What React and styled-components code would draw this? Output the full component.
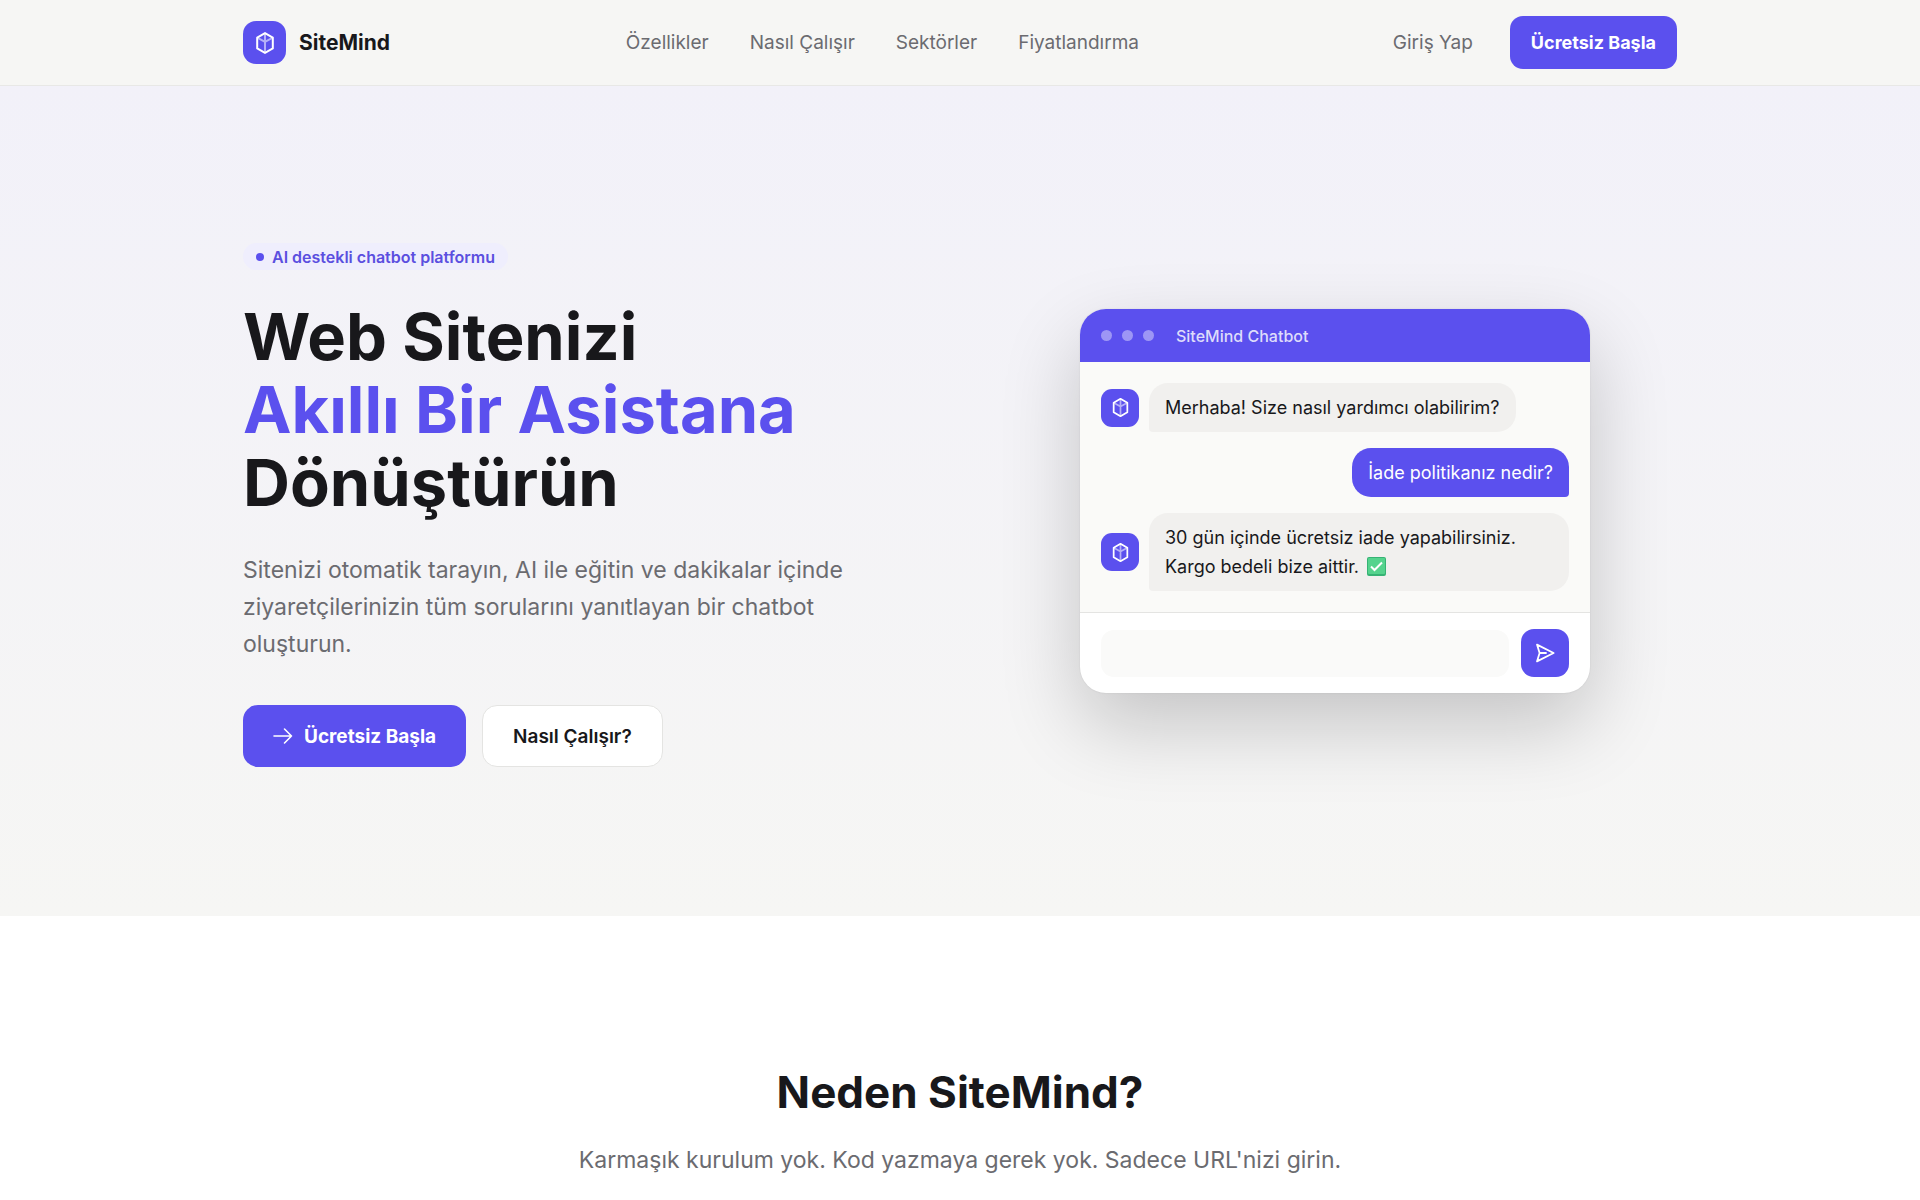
import React from 'react';
import styled, { createGlobalStyle } from 'styled-components';

const GlobalStyle = createGlobalStyle`
  * {
    box-sizing: border-box;
  }
  body {
    margin: 0;
    background: #ffffff;
    color: #18181b;
    font-family: Inter, 'Noto Sans', sans-serif;
    font-size: 19px;
    overflow-x: hidden;
  }
  h1, h2, p {
    margin: 0;
  }
  a {
    color: inherit;
    text-decoration: none;
  }
  button, input {
    font-family: inherit;
    border: none;
  }
`;

const Container = styled.div`
  width: 100%;
  max-width: 1482px;
  margin: 0 auto;
  padding: 0 24px;
`;

const Header = styled.header`
  background: #f6f6f4;
  border-bottom: 1px solid #e8e8e6;
`;

const HeaderInner = styled(Container)`
  display: flex;
  align-items: center;
  justify-content: space-between;
  height: 85px;
`;

const Brand = styled.a`
  display: flex;
  align-items: center;
  gap: 13px;
  font-size: 21px;
  font-weight: 700;
`;

const Mark = styled.span`
  display: flex;
  flex: none;
  align-items: center;
  justify-content: center;
  width: ${(props) => props.$size}px;
  height: ${(props) => props.$size}px;
  border-radius: ${(props) => props.$radius}px;
  background: #5b50ee;
  color: #ffffff;
`;

const Nav = styled.nav`
  display: flex;
  gap: 41px;
  margin-right: 18px;
  color: #6b6b70;
`;

const Actions = styled.div`
  display: flex;
  align-items: center;
  gap: 37px;
  color: #6b6b70;
`;

const Button = styled.button`
  display: inline-flex;
  align-items: center;
  gap: 11px;
  height: ${(props) => (props.$large ? 62 : 53)}px;
  padding: 0 ${(props) => (props.$large ? 30 : 21)}px;
  border: ${(props) => (props.$light ? '1px solid #e4e4e2' : 'none')};
  border-radius: ${(props) => (props.$large ? 15 : 13)}px;
  background: ${(props) => (props.$light ? '#ffffff' : '#5b50ee')};
  color: ${(props) => (props.$light ? '#18181b' : '#ffffff')};
  font-size: ${(props) => (props.$large ? 19 : 18)}px;
  font-weight: ${(props) => (props.$light ? 600 : 700)};
  cursor: pointer;
`;

const Hero = styled.section`
  background: linear-gradient(#f2f1f9, #f6f6f4);
`;

const HeroInner = styled(Container)`
  display: grid;
  grid-template-columns: 1fr 1fr;
  align-items: center;
  gap: 66px;
  padding-top: 149px;
  padding-bottom: 149px;
`;

const Intro = styled.div`
  padding-top: 8px;
`;

const Badge = styled.div`
  display: flex;
  align-items: center;
  gap: 8px;
  width: fit-content;
  height: 27px;
  padding: 0 13px;
  border-radius: 14px;
  background: #efeefd;
  color: #5b4fe0;
  font-size: 16px;
  font-weight: 600;
`;

const BadgeDot = styled.span`
  width: 8px;
  height: 8px;
  border-radius: 50%;
  background: #5b50ee;
`;

const Title = styled.h1`
  margin-top: 30px;
  font-size: 65px;
  font-weight: 700;
  line-height: 73px;
`;

const Accent = styled.span`
  display: block;
  color: #5b50ee;
`;

const Lead = styled.p`
  max-width: 640px;
  margin-top: 33px;
  color: #6b6b70;
  font-size: 23px;
  line-height: 37px;
`;

const ButtonRow = styled.div`
  display: flex;
  gap: 16px;
  margin-top: 42px;
`;

const ChatCard = styled.div`
  justify-self: center;
  width: 100%;
  max-width: 510px;
  overflow: hidden;
  border-radius: 26px;
  background: #ffffff;
  box-shadow: 0 32px 80px rgba(0, 0, 0, 0.2), 0 0 2px rgba(0, 0, 0, 0.1);
`;

const ChatHeader = styled.div`
  display: flex;
  align-items: center;
  gap: 10px;
  height: 53px;
  padding: 0 21px;
  background: #5b50ee;
  color: #dedcfb;
`;

const WindowDot = styled.span`
  width: 11px;
  height: 11px;
  border-radius: 50%;
  background: #9d96f5;
`;

const ChatTitle = styled.span`
  margin-left: 12px;
  font-size: 16px;
  font-weight: 500;
`;

const Messages = styled.div`
  display: flex;
  flex-direction: column;
  gap: 16px;
  padding: 21px;
  background: #fafaf8;
`;

const Message = styled.div`
  display: flex;
  align-items: center;
  justify-content: ${(props) => (props.$own ? 'flex-end' : 'flex-start')};
  gap: 10px;
`;

const Bubble = styled.div`
  padding: 10px 16px;
  border-radius: ${(props) => (props.$own ? '19px 19px 4px 19px' : '19px 19px 19px 4px')};
  background: ${(props) => (props.$own ? '#5b50ee' : '#f1f0ee')};
  color: ${(props) => (props.$own ? '#ffffff' : '#18181b')};
  font-size: 18px;
  line-height: 29px;
`;

const Check = styled.svg`
  width: 19px;
  height: 19px;
  margin-left: 8px;
  vertical-align: -3px;
`;

const Composer = styled.form`
  display: flex;
  align-items: center;
  gap: 12px;
  padding: 16px 21px;
  border-top: 1px solid #e4e4e2;
`;

const ComposerInput = styled.input`
  flex: 1;
  min-width: 0;
  height: 47px;
  padding: 0 16px;
  border-radius: 13px;
  background: #fafaf9;
  font-size: 18px;
`;

const SendButton = styled.button`
  display: flex;
  align-items: center;
  justify-content: center;
  width: 48px;
  height: 48px;
  padding: 0;
  border-radius: 13px;
  background: #5b50ee;
  color: #ffffff;
  cursor: pointer;
`;

const Why = styled.section`
  padding: 146px 24px;
  text-align: center;
`;

const WhyTitle = styled.h2`
  font-size: 44px;
  font-weight: 700;
  line-height: 60px;
`;

const WhyText = styled.p`
  margin-top: 20px;
  color: #6b6b70;
  font-size: 23px;
  line-height: 37px;
`;

const CubeIcon = ({ size }) => (
  <svg width={size} height={size} viewBox="0 0 24 24" fill="none" stroke="currentColor" aria-hidden="true">
    <path d="M12 2.5 V21.5 M4.2 6.6 L12 10.8 L19.8 6.6" strokeWidth="2" opacity="0.55" />
    <path d="M12 2.1 L19.8 6.6 V17.4 L12 21.9 L4.2 17.4 V6.6 Z" strokeWidth="2" strokeLinejoin="round" />
  </svg>
);

const ArrowIcon = () => (
  <svg width="20" height="20" viewBox="0 0 20 20" fill="none" stroke="currentColor" aria-hidden="true">
    <path
      d="M1 10 H18.5 M11.5 3 L18.5 10 L11.5 17"
      strokeWidth="1.6"
      strokeLinecap="round"
      strokeLinejoin="round"
    />
  </svg>
);

const SendIcon = () => (
  <svg width="22" height="22" viewBox="0 0 22 22" fill="none" stroke="currentColor" aria-hidden="true">
    <path
      d="M3 2.6 L19.6 11 L3 19.4 L5.6 11 Z M5.6 11 H12"
      strokeWidth="1.8"
      strokeLinecap="round"
      strokeLinejoin="round"
    />
  </svg>
);

const links = ['Özellikler', 'Nasıl Çalışır', 'Sektörler', 'Fiyatlandırma'];

const messages = [
  { text: 'Merhaba! Size nasıl yardımcı olabilirim?' },
  { text: 'İade politikanız nedir?', own: true },
  { text: '30 gün içinde ücretsiz iade yapabilirsiniz. Kargo bedeli bize aittir.', done: true },
];

const ChatMessage = ({ text, own, done }) => (
  <Message $own={own}>
    {!own && (
      <Mark $size={38} $radius={11}>
        <CubeIcon size={21} />
      </Mark>
    )}
    <Bubble $own={own}>
      {text}
      {done && (
        <Check viewBox="0 0 19 19" role="img" aria-label="Tamam">
          <rect width="19" height="19" rx="2" fill="#36b374" />
          <rect x="1" y="1" width="17" height="16" rx="1" fill="#55d38d" />
          <path d="M4 9.5 L7.5 13 L15 5.5" fill="none" stroke="#ffffff" strokeWidth="2" />
        </Check>
      )}
    </Bubble>
  </Message>
);

const App = () => {
  const [text, setText] = React.useState('');

  function submitHandler(event) {
    event.preventDefault();
    setText('');
  }

  return (
    <div lang="tr">
      <GlobalStyle />
      <Header>
        <HeaderInner>
          <Brand href="#">
            <Mark $size={43} $radius={13}>
              <CubeIcon size={24} />
            </Mark>
            SiteMind
          </Brand>
          <Nav>
            {links.map((link) => (
              <a href="#" key={link}>
                {link}
              </a>
            ))}
          </Nav>
          <Actions>
            <a href="#">Giriş Yap</a>
            <Button>Ücretsiz Başla</Button>
          </Actions>
        </HeaderInner>
      </Header>
      <Hero>
        <HeroInner>
          <Intro>
            <Badge>
              <BadgeDot />
              AI destekli chatbot platformu
            </Badge>
            <Title>
              Web Sitenizi
              <Accent>Akıllı Bir Asistana</Accent>
              Dönüştürün
            </Title>
            <Lead>
              Sitenizi otomatik tarayın, AI ile eğitin ve dakikalar içinde ziyaretçilerinizin tüm
              sorularını yanıtlayan bir chatbot oluşturun.
            </Lead>
            <ButtonRow>
              <Button $large>
                <ArrowIcon />
                Ücretsiz Başla
              </Button>
              <Button $large $light>
                Nasıl Çalışır?
              </Button>
            </ButtonRow>
          </Intro>
          <ChatCard>
            <ChatHeader>
              <WindowDot />
              <WindowDot />
              <WindowDot />
              <ChatTitle>SiteMind Chatbot</ChatTitle>
            </ChatHeader>
            <Messages>
              {messages.map((message) => (
                <ChatMessage key={message.text} {...message} />
              ))}
            </Messages>
            <Composer onSubmit={submitHandler}>
              <ComposerInput
                type="text"
                aria-label="Mesaj"
                value={text}
                onChange={(event) => setText(event.target.value)}
              />
              <SendButton type="submit" aria-label="Gönder">
                <SendIcon />
              </SendButton>
            </Composer>
          </ChatCard>
        </HeroInner>
      </Hero>
      <Why>
        <WhyTitle>Neden SiteMind?</WhyTitle>
        <WhyText>Karmaşık kurulum yok. Kod yazmaya gerek yok. Sadece URL'nizi girin.</WhyText>
      </Why>
    </div>
  );
};

export default App;
